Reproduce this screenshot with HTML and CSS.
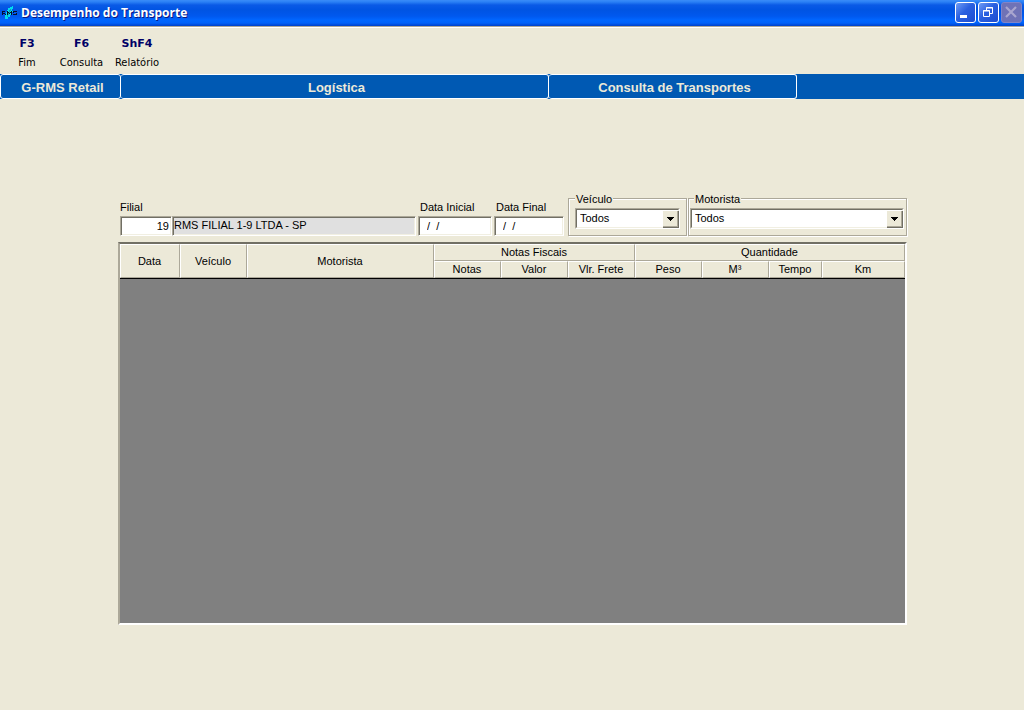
FILE: index.html
```html
<!DOCTYPE html>
<html lang="pt-BR">
<head>
<meta charset="utf-8">
<title>Desempenho do Transporte</title>
<link rel="stylesheet" href="styles.css">
</head>
<body>
<header class="titlebar">
  <svg class="app-icon" width="16" height="16" viewBox="0 0 16 16" shape-rendering="crispEdges" aria-hidden="true">
    <path d="M3 14V10H4V7H5V5H6V3H8V2H10V1H11V4H10V6H11V7H9V9H10V10H8V12H6V14Z" fill="#00dcf0"/>
    <path d="M5 12V9H6V7H7V5H8V4H9V6H8V8H7V10H6V12Z" fill="#10a0b8"/>
    <path d="M0 6h3v1h-2v1h2v1h1v1h-1v-1h-2v1h-1zM5 6h1v1h1v1h1v-1h1v-1h1v4h-1v-2h-1v1h-1v-1h-1v2h-1zM11 6h4v1h-3v1h3v2h-4v-1h3v-1h-3z" fill="#06102c"/>
  </svg>
  <h1 class="title">Desempenho do Transporte</h1>
  <div class="window-buttons">
    <button class="win-btn" type="button" aria-label="Minimizar">
      <svg width="19" height="19" viewBox="0 0 19 19"><path d="M4 12h7v3H4z" fill="#fff"/></svg>
    </button>
    <button class="win-btn" type="button" aria-label="Restaurar">
      <svg width="19" height="19" viewBox="0 0 19 19" fill="none" stroke="#fff"><path d="M7.500 7V4.500H13.500V10.500H11M7 5h7"/><path d="M4.500 7.500h6v6h-6zM4 8h7"/></svg>
    </button>
    <button class="win-btn win-close" type="button" aria-label="Fechar" disabled>
      <svg width="19" height="19" viewBox="0 0 19 19"><path d="M4 4l10 10M14 4L4 14" stroke="#a9a6cf" stroke-width="2.200" fill="none"/></svg>
    </button>
  </div>
</header>

<div class="toolbar">
  <button class="tool" type="button"><b class="key">F3</b><span>Fim</span></button>
  <button class="tool" type="button"><b class="key">F6</b><span>Consulta</span></button>
  <button class="tool" type="button"><b class="key">ShF4</b><span>Relatório</span></button>
</div>

<nav class="tabs">
  <a class="tab tab-product" href="#produto">G-RMS Retail</a>
  <a class="tab tab-module" href="#modulo">Logística</a>
  <a class="tab tab-screen" href="#tela">Consulta de Transportes</a>
</nav>

<main class="content">
  <form class="filters">
    <div class="field branch">
      <label for="filial">Filial</label>
      <div class="branch-inputs">
        <input class="box code" id="filial" type="text" value="19">
        <input class="box branch-name" type="text" value="RMS FILIAL 1-9 LTDA - SP" aria-label="Nome da filial" readonly>
      </div>
    </div>
    <div class="field date-start">
      <label for="inicio">Data Inicial</label>
      <input class="box date" id="inicio" type="text" value="/  /">
    </div>
    <div class="field date-end">
      <label for="fim">Data Final</label>
      <input class="box date" id="fim" type="text" value="/  /">
    </div>
    <div class="group vehicle">
      <label class="legend" for="veiculo">Veículo</label>
      <div class="combo">
        <select class="select" id="veiculo"><option>Todos</option></select>
        <svg class="arrow" viewBox="0 0 16 17" width="16" height="17" aria-hidden="true"><path d="M5 7h7v1h-1v1h-1v1h-1v1h-1v-1h-1v-1h-1v-1h-1z"/></svg>
      </div>
    </div>
    <div class="group driver">
      <label class="legend" for="motorista">Motorista</label>
      <div class="combo">
        <select class="select" id="motorista"><option>Todos</option></select>
        <svg class="arrow" viewBox="0 0 16 17" width="16" height="17" aria-hidden="true"><path d="M5 7h7v1h-1v1h-1v1h-1v1h-1v-1h-1v-1h-1v-1h-1z"/></svg>
      </div>
    </div>
  </form>

  <div class="grid-frame">
    <table class="grid">
      <colgroup>
        <col class="c-date"><col class="c-num"><col class="c-driver">
        <col class="c-num"><col class="c-num"><col class="c-num">
        <col class="c-num"><col class="c-num"><col class="c-time"><col class="c-km">
      </colgroup>
      <thead>
        <tr>
          <th rowspan="2">Data</th>
          <th rowspan="2">Veículo</th>
          <th rowspan="2">Motorista</th>
          <th colspan="3">Notas Fiscais</th>
          <th colspan="4">Quantidade</th>
        </tr>
        <tr>
          <th>Notas</th><th>Valor</th><th>Vlr. Frete</th>
          <th>Peso</th><th>M³</th><th>Tempo</th><th>Km</th>
        </tr>
      </thead>
      <tbody></tbody>
    </table>
  </div>
</main>
</body>
</html>
```

FILE: styles.css
```css
* { box-sizing: border-box; }

body {
  margin: 0;
  min-height: 100vh;
  display: flex;
  flex-direction: column;
  background: #ece9d8;
  color: #000;
  font: 11px/13px "Liberation Sans", Arial, sans-serif;
}

button, input, select { font: inherit; color: inherit; margin: 0; }

/* Title bar */
.titlebar {
  display: flex;
  align-items: center;
  height: 27px;
  padding: 0 2px;
  gap: 3px;
  border-bottom: 1px solid #aca899;
  background: linear-gradient(#3a8cf8 0, #2a80f5 2px, #0a5ae6 5px, #0054e3 10px, #0058ee 16px, #0066ff 20px, #0062fa 23px, #0040c8 26px);
}
.title {
  flex: 1;
  margin: 0;
  color: #fff;
  font: bold 12px/18px "Open Sans", "Trebuchet MS", sans-serif;
  text-shadow: 1px 1px #0a1883;
}
.window-buttons { display: flex; gap: 2px; padding-bottom: 1px; }
.win-btn {
  display: flex;
  padding: 0;
  width: 21px;
  height: 21px;
  border: 1px solid #fff;
  border-radius: 3px;
  background: linear-gradient(135deg, #6f9cf5, #2a60e0 45%, #1d4cd0);
}
.win-close { background: #6f72b6; border-color: #8084c8; }

/* Function keys */
.toolbar {
  display: grid;
  grid-template-columns: 54px 55px 56px;
  height: 47px;
  border-top: 1px solid #fff;
}
.tool {
  display: flex;
  flex-direction: column;
  align-items: center;
  gap: 6px;
  padding: 9px 0 0;
  border: 0;
  background: none;
  font: 11px/13px "DejaVu Sans Condensed", Tahoma, sans-serif;
}
.key { font: bold 11px/13px "DejaVu Sans", Verdana, sans-serif; color: #000066; }

/* Breadcrumb tabs */
.tabs { display: flex; height: 25px; background: #0059b3; }
.tab {
  padding-left: 4px;
  border: 1px solid #fff;
  border-radius: 3px;
  color: #ece9d8;
  font: bold 13px/25px "Liberation Sans", Arial, sans-serif;
  text-align: center;
  text-decoration: none;
}
.tab + .tab { border-left: 0; }
.tab-product { width: 121px; }
.tab-module { width: 428px; }
.tab-screen { width: 248px; }

/* Filters */
.content {
  flex: 1;
  display: flex;
  flex-direction: column;
  padding: 94px 116px 85px 118px;
}
.filters { display: flex; align-items: flex-end; padding: 0 1px 1px 2px; height: 44px; }
.field { display: flex; flex-direction: column; gap: 2px; }
.branch { flex: 1; }
.branch-inputs { display: flex; }
.date-start { width: 74px; margin-left: 2px; }
.date-end { width: 70px; margin-left: 2px; }
.date-start label, .date-end label { padding-left: 2px; white-space: nowrap; }
.box {
  width: 100%;
  height: 20px;
  padding: 0 1px;
  border: 1px solid;
  border-color: #aca899 #fff #fff #aca899;
  border-radius: 0;
  box-shadow: inset 1px 1px #716f64, inset -1px -1px #f1efe2;
  background: #fff;
}
.code { width: 52px; padding-right: 2px; text-align: right; }
.branch-name { flex: 1; background: #e0e0e0; padding-bottom: 2px; }
.date { padding-left: 8px; }

.group {
  height: 38px;
  border: 1px solid #aca899;
  box-shadow: 1px 1px #fff, inset 1px 1px #fff;
}
.vehicle { width: 119px; margin-left: 4px; padding: 0 6px; }
.driver { width: 219px; margin-left: 1px; padding: 0 2px 0 1px; }
.legend {
  display: block;
  width: max-content;
  margin-top: -6px;
  padding: 0 1px;
  background: #ece9d8;
}
.driver .legend { margin-left: 4px; }
.combo {
  display: grid;
  margin-top: 2px;
  height: 21px;
  border: 1px solid;
  border-color: #aca899 #fff #fff #aca899;
}
.select, .arrow { grid-area: 1 / 1; }
.select {
  width: 100%;
  height: 19px;
  padding: 0 18px 0 3px;
  appearance: none;
  border: 1px solid;
  border-color: #716f64 #f1efe2 #f1efe2 #716f64;
  border-radius: 0;
  background: #fff;
}
.arrow {
  justify-self: end;
  align-self: center;
  margin-right: 1px;
  background: #ece9d8;
  box-shadow: inset 1px 1px #fff, inset -1px -1px #aca899, 1px 1px #716f64;
  pointer-events: none;
}

/* Results grid */
.grid-frame {
  flex: 1;
  margin: 5px 1px 0 0;
  border: 2px solid;
  border-color: #716f64 #fff #fff #aca899;
  background: #808080;
}
.grid {
  width: 100%;
  table-layout: fixed;
  border-collapse: separate;
  border-spacing: 0;
  border-bottom: 1px solid #000;
}
.grid th {
  height: 17px;
  padding: 0 1px 0 0;
  font-weight: normal;
  background: #ece9d8;
  border: 1px solid;
  border-color: #fff #aca899 #aca899 #fff;
}
.c-date { width: 60px; }
.c-num { width: 67px; }
.c-driver { width: auto; }
.c-time { width: 53px; }
.c-km { width: 83px; }
```
